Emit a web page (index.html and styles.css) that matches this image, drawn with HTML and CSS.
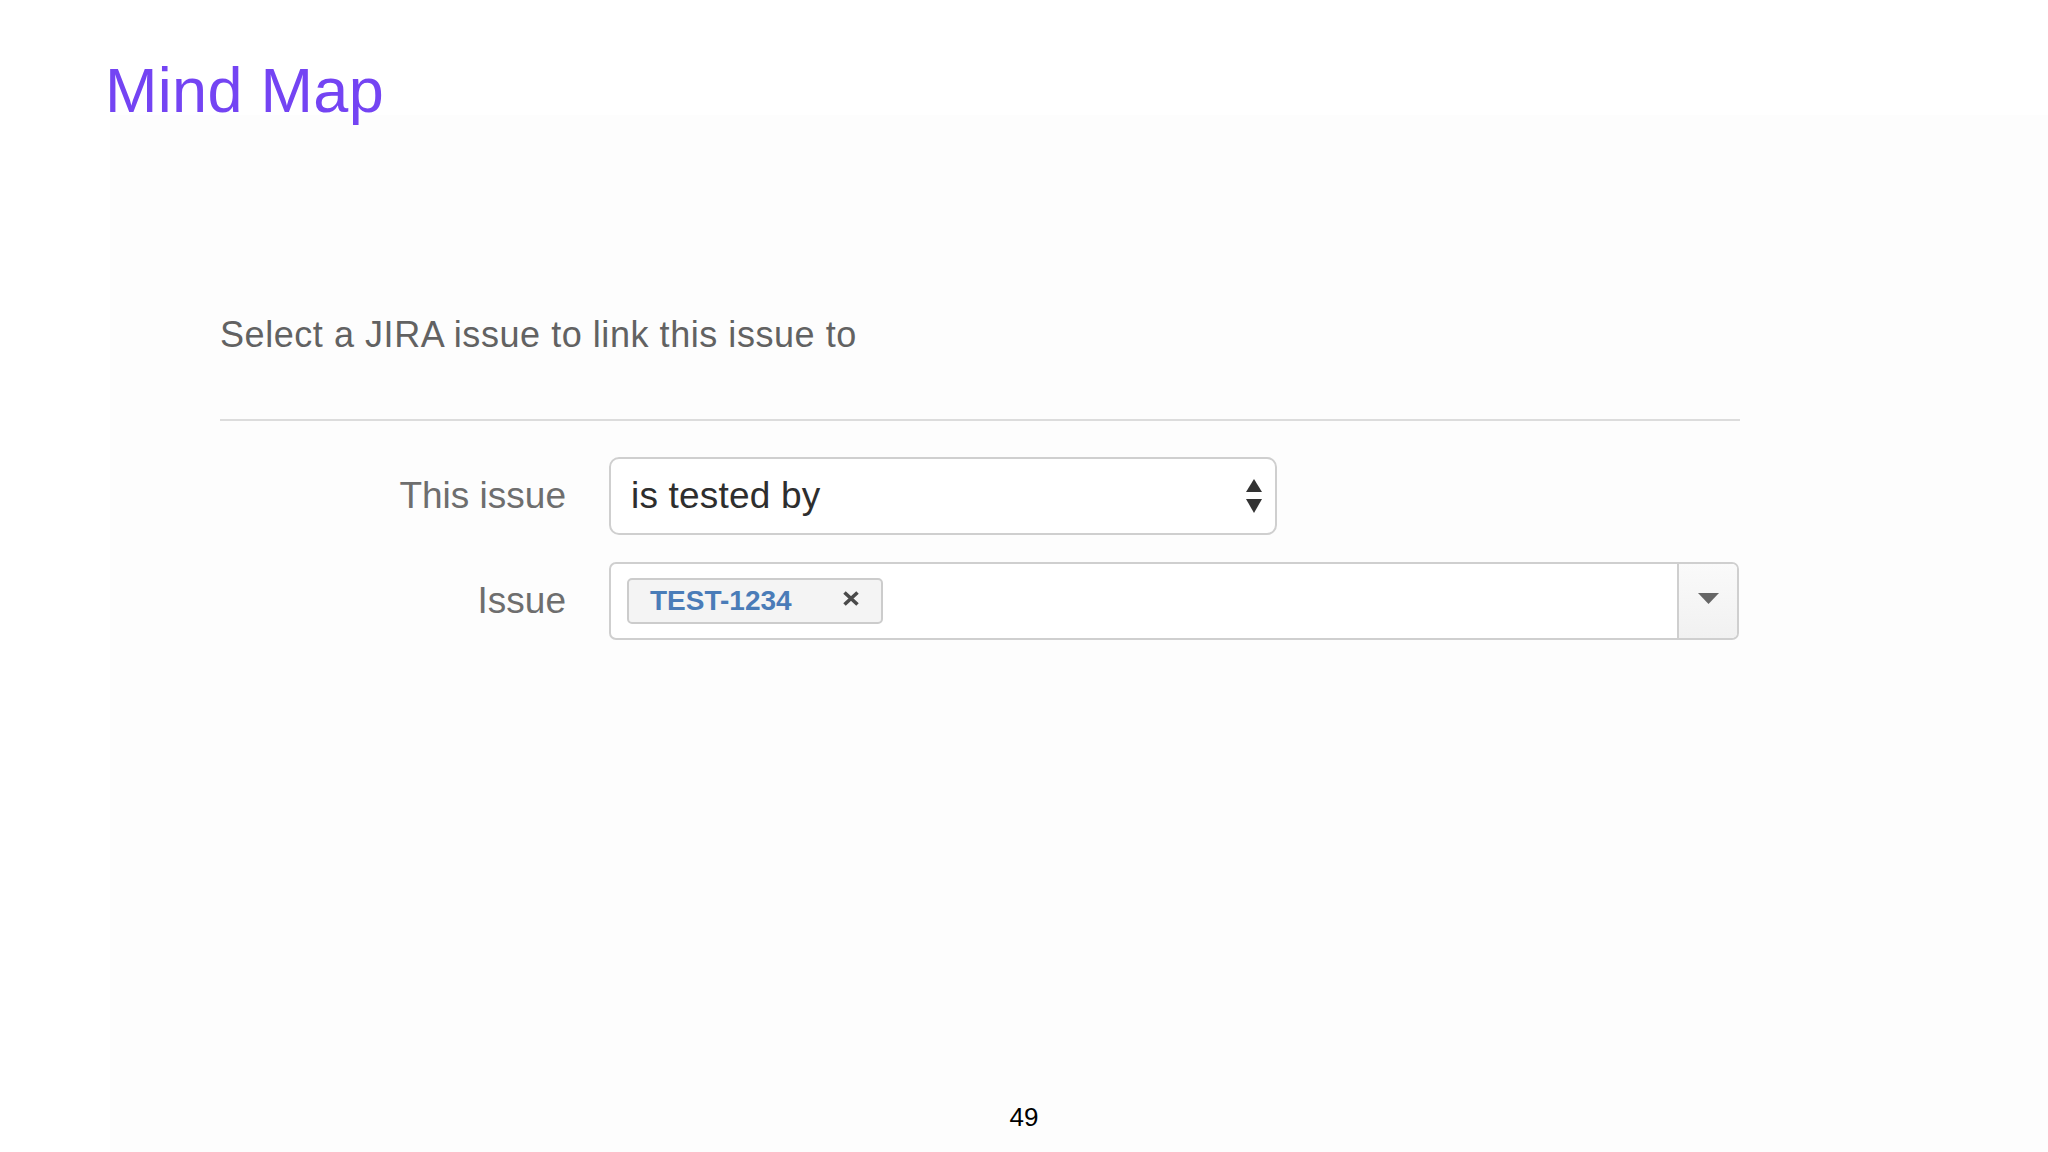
FILE: index.html
```html
<!DOCTYPE html>
<html lang="en">
<head>
<meta charset="utf-8">
<title>Mind Map</title>
<link rel="stylesheet" href="styles.css">
</head>
<body>
<header class="top">
  <h1 class="title">Mind Map</h1>
</header>
<main class="stage">
  <section class="dialog">
    <h2 class="dialog-heading">Select a JIRA issue to link this issue to</h2>
    <div class="rule"></div>
    <div class="form">
      <label class="label">This issue</label>
      <div class="select">
        <span class="select-value">is tested by</span>
        <svg class="spinner" width="16" height="34" viewBox="0 0 16 34">
          <polygon points="8,0 16,13 0,13" fill="#333"/>
          <polygon points="0,20 16,20 8,34" fill="#333"/>
        </svg>
      </div>
      <label class="label">Issue</label>
      <div class="picker">
        <div class="picker-field">
          <span class="tag">
            <span class="tag-text">TEST-1234</span>
            <svg class="tag-x" width="18" height="15" viewBox="0 0 18 15">
              <path d="M2.5 1.5 L15.5 13.5 M15.5 1.5 L2.5 13.5" stroke="#4a4a4a" stroke-width="3.6" stroke-linecap="butt"/>
            </svg>
          </span>
        </div>
        <div class="picker-button">
          <svg width="21" height="11" viewBox="0 0 21 11"><polygon points="0,0 21,0 10.5,11" fill="#666"/></svg>
        </div>
      </div>
    </div>
  </section>
</main>
<div class="page-number">49</div>
</body>
</html>
```

FILE: styles.css
```css
html, body {
  margin: 0;
  padding: 0;
}
body {
  width: 2048px;
  height: 1152px;
  background: #ffffff;
  font-family: "Liberation Sans", Arial, Helvetica, sans-serif;
  display: flex;
  flex-direction: column;
  position: relative;
  overflow: hidden;
}
.top {
  height: 115px;
  flex: none;
  padding-left: 105px;
  box-sizing: border-box;
  position: relative;
  z-index: 1;
}
.title {
  margin: 0;
  padding-top: 55px;
  font-size: 63px;
  line-height: 70px;
  font-weight: normal;
  color: #7444f3;
  letter-spacing: 0.3px;
}
.stage {
  flex: 1;
  margin-left: 110px;
  background: #fdfdfd;
  padding-top: 200px;
  padding-left: 110px;
}
.dialog {
  width: 1520px;
}
.dialog-heading {
  margin: 0;
  font-size: 36px;
  line-height: 40px;
  font-weight: normal;
  color: #626262;
  letter-spacing: 0.55px;
}
.rule {
  margin-top: 64px;
  height: 2px;
  background: #dcdcdc;
}
.form {
  margin-top: 36px;
  display: grid;
  grid-template-columns: 346px 1130px;
  column-gap: 43px;
  row-gap: 27px;
  align-items: center;
}
.label {
  text-align: right;
  font-size: 37px;
  color: #6e6e6e;
}
.select {
  width: 668px;
  height: 78px;
  box-sizing: border-box;
  border: 2px solid #cfcfcf;
  border-radius: 10px;
  background: #ffffff;
  display: flex;
  align-items: center;
  justify-content: space-between;
  padding: 0 13px 0 20px;
}
.select-value {
  font-size: 37px;
  color: #2e2e2e;
  letter-spacing: 0.2px;
}
.spinner {
  display: block;
}
.picker {
  height: 78px;
  box-sizing: border-box;
  border: 2px solid #cfcfcf;
  border-radius: 7px;
  background: #ffffff;
  display: flex;
  overflow: hidden;
}
.picker-field {
  flex: 1;
  display: flex;
  align-items: center;
  padding-left: 16px;
}
.tag {
  width: 256px;
  height: 46px;
  box-sizing: border-box;
  border: 2px solid #cccccc;
  border-radius: 5px;
  background: #f4f4f4;
  display: flex;
  align-items: center;
  justify-content: space-between;
  padding: 0 21px 0 21px;
}
.tag-text {
  font-size: 28px;
  font-weight: bold;
  color: #4a7cb8;
}
.tag-x {
  display: block;
  margin-top: -5px;
}
.picker-button {
  width: 60px;
  flex: none;
  border-left: 2px solid #cfcfcf;
  background: linear-gradient(#fafafa, #f1f1f1);
  display: flex;
  align-items: center;
  justify-content: center;
  padding-bottom: 6px;
  box-sizing: border-box;
}
.picker-button svg {
  display: block;
}
.page-number {
  position: absolute;
  left: 0;
  right: 0;
  top: 1102px;
  text-align: center;
  font-size: 26px;
  line-height: 30px;
  color: #000;
}
```
